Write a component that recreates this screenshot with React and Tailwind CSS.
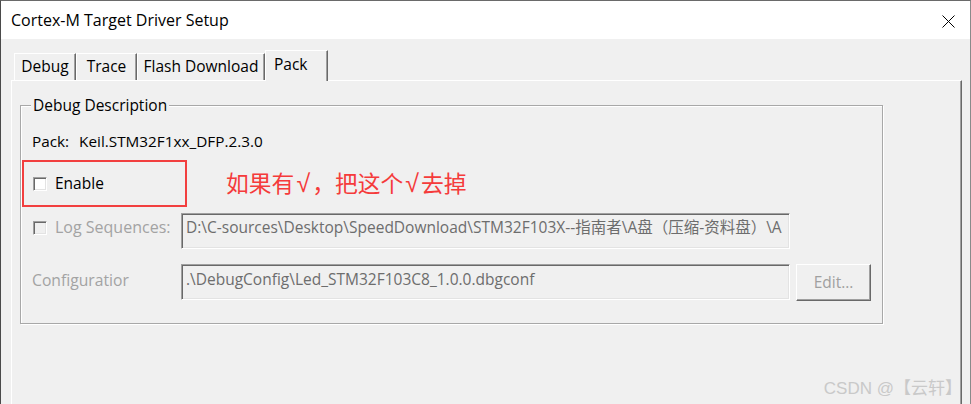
import React from "react";

const FONT = { fontFamily: '"Open Sans", "Noto Sans CJK SC", sans-serif' };
const ROOT = { fontFamily: '"Liberation Sans", sans-serif' };

function Tab({ label, w, selected }) {
  if (selected) {
    return (
      <div
        className={`${w} h-[31px] -mb-px relative z-10 bg-[#f0f0f0] border-t border-l border-white border-r border-r-[#696969] shadow-[inset_-1px_0_0_#a0a0a0] flex items-center justify-start pl-[8px] pb-[2px] text-[15.5px] text-black`}
      >
        {label}
      </div>
    );
  }
  return (
    <div
      className={`${w} h-[27px] bg-[#f0f0f0] border-t border-l border-white border-r border-r-[#696969] shadow-[inset_-1px_0_0_#a0a0a0] flex items-center justify-center text-[15.5px] text-black`}
    >
      {label}
    </div>
  );
}

function CheckBox({ disabled }) {
  return (
    <div
      className={`w-[14px] h-[14px] shrink-0 border-t border-l border-[#a0a0a0] border-r border-b border-r-white border-b-white shadow-[inset_1px_1px_0_#696969,inset_-1px_-1px_0_#e3e3e3] ${
        disabled ? "bg-[#f0f0f0]" : "bg-white"
      }`}
    />
  );
}

const Check = () => (
  <span style={ROOT} className="text-[25px] px-[2px]">
    √
  </span>
);

export default function App() {
  return (
    <div
      className="w-[971px] h-[404px] overflow-hidden flex flex-col border-t border-l border-r border-t-[#6a6a6a] border-l-[#4a4a4a] border-r-[#8a8a8a] bg-[#f0f0f0] relative"
      style={FONT}
    >
      {/* Title bar */}
      <div className="h-[38px] shrink-0 bg-white flex items-center justify-between pl-[10px] pr-[15px]">
        <span className="text-[16px] text-black leading-none">Cortex-M Target Driver Setup</span>
        <svg width="13" height="13" viewBox="0 0 13 13" className="mt-[2px]">
          <path d="M0.5 0.5 L12.5 12.5 M12.5 0.5 L0.5 12.5" stroke="#000" strokeWidth="1" fill="none" />
        </svg>
      </div>

      {/* Client area */}
      <div className="flex-1 flex flex-col pt-[11px] pl-[10px]">
        {/* Tabs */}
        <div className="flex items-end pl-[3px] h-[30px]">
          <Tab label="Debug" w="w-[62px]" />
          <Tab label="Trace" w="w-[61px]" />
          <Tab label="Flash Download" w="w-[128px]" />
          <Tab label="Pack" w="w-[63px]" selected />
        </div>

        {/* Tab panel */}
        <div className="w-[951px] flex-1 border-t border-l border-white border-r border-r-[#696969] shadow-[inset_-1px_0_0_#a0a0a0] pl-[8px] pt-[13px]">
          <fieldset className="w-[863px] h-[230px] border border-[#a8a8a8] shadow-[1px_1px_0_#ffffff,inset_1px_1px_0_#ffffff] flex flex-col">
            <legend className="ml-[10px] px-[2px] bg-[#f0f0f0] text-[15.5px] leading-[22px] text-black">
              Debug Description
            </legend>

            {/* Pack */}
            <div className="mt-[15px] h-[20px] leading-[20px] pl-[11px] text-[15.3px] text-black flex">
              <span>Pack:</span>
              <span className="ml-[10px]">Keil.STM32F1xx_DFP.2.3.0</span>
            </div>

            {/* Enable row */}
            <div className="mt-[9px] h-[47px] flex items-center">
              <div className="ml-[1px] w-[165px] h-[47px] border-2 border-[#f23f3f] flex items-center pl-[9px]">
                <CheckBox />
                <span className="ml-[8px] text-[15.5px] text-black leading-[20px] mb-[2px]">Enable</span>
              </div>
              <span
                className="ml-[39px] text-[22.8px] text-[#f53b3b] leading-none"
                style={{ fontFamily: '"Noto Sans CJK SC", sans-serif' }}
              >
                如果有<Check />，把这个<Check />去掉
              </span>
            </div>

            {/* Log sequences */}
            <div className="mt-[6px] h-[36px] flex items-start">
              <div className="ml-[12px] mt-[8px]">
                <CheckBox disabled />
              </div>
              <span className="ml-[8px] mt-[4px] leading-[20px] text-[16px] text-[#a3a3a3] w-[126px] whitespace-nowrap">
                Log Sequences:
              </span>
              <div className="w-[609px] h-[36px] overflow-hidden border-t border-l border-[#a0a0a0] border-r border-b border-r-white border-b-white shadow-[inset_1px_1px_0_#696969,inset_-1px_-1px_0_#e3e3e3] pl-[4px] pt-[3px] leading-[20px] text-[15.5px] text-[#6d6d6d] whitespace-nowrap">
                D:\C-sources\Desktop\SpeedDownload\STM32F103X--指南者\A盘（压缩-资料盘）\A
              </div>
            </div>

            {/* Configuration */}
            <div className="mt-[15px] h-[37px] flex items-start">
              <span className="ml-[11px] mt-[6px] leading-[20px] text-[15.7px] text-[#a3a3a3] w-[149px] whitespace-nowrap">
                Configuratior
              </span>
              <div className="w-[609px] h-[36px] overflow-hidden border-t border-l border-[#a0a0a0] border-r border-b border-r-white border-b-white shadow-[inset_1px_1px_0_#696969,inset_-1px_-1px_0_#e3e3e3] pl-[4px] pt-[4px] leading-[20px] text-[15.5px] text-[#6d6d6d] whitespace-nowrap">
                .\DebugConfig\Led_STM32F103C8_1.0.0.dbgconf
              </div>
              <div className="ml-[6px] w-[75px] h-[37px] border-t border-l border-white border-r border-b border-r-[#696969] border-b-[#696969] shadow-[inset_-1px_-1px_0_#a0a0a0] flex items-center justify-center text-[15.5px] text-[#a0a0a0]">
                Edit...
              </div>
            </div>
          </fieldset>
        </div>
      </div>

      {/* Watermark */}
      <div
        className="absolute right-[8px] bottom-[7px] text-[17px] text-[#c9c9c9] leading-none"
        style={{ fontFamily: '"Liberation Sans", "Noto Sans CJK SC", sans-serif' }}
      >
        CSDN @【云轩】
      </div>
    </div>
  );
}
